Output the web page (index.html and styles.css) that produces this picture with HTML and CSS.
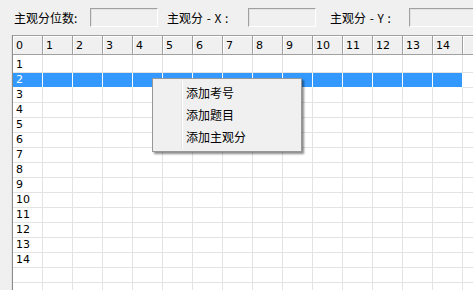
FILE: index.html
```html
<!DOCTYPE html>
<html>
<head>
<meta charset="utf-8">
<link rel="stylesheet" href="styles.css">
</head>
<body>
<div class="toolbar">
  <span class="lbl lbl-a">主观分位数:</span>
  <span class="box box-a"></span>
  <span class="lbl lbl-b">主观分 - X :</span>
  <span class="box box-b"></span>
  <span class="lbl lbl-c">主观分 - Y :</span>
  <span class="box box-c"></span>
</div>
<div class="gridwrap">
  <table class="grid">
    <thead>
      <tr><th>0</th><th>1</th><th>2</th><th>3</th><th>4</th><th>5</th><th>6</th><th>7</th><th>8</th><th>9</th><th>10</th><th>11</th><th>12</th><th>13</th><th>14</th><th></th></tr>
    </thead>
    <tbody>
      <tr class="first"><td>1</td><td></td><td></td><td></td><td></td><td></td><td></td><td></td><td></td><td></td><td></td><td></td><td></td><td></td><td></td><td class="x"></td></tr>
      <tr class="sel"><td>2</td><td></td><td></td><td></td><td></td><td></td><td></td><td></td><td></td><td></td><td></td><td></td><td></td><td></td><td></td><td class="x"></td></tr>
      <tr><td>3</td><td></td><td></td><td></td><td></td><td></td><td></td><td></td><td></td><td></td><td></td><td></td><td></td><td></td><td></td><td class="x"></td></tr>
      <tr><td>4</td><td></td><td></td><td></td><td></td><td></td><td></td><td></td><td></td><td></td><td></td><td></td><td></td><td></td><td></td><td class="x"></td></tr>
      <tr><td>5</td><td></td><td></td><td></td><td></td><td></td><td></td><td></td><td></td><td></td><td></td><td></td><td></td><td></td><td></td><td class="x"></td></tr>
      <tr><td>6</td><td></td><td></td><td></td><td></td><td></td><td></td><td></td><td></td><td></td><td></td><td></td><td></td><td></td><td></td><td class="x"></td></tr>
      <tr><td>7</td><td></td><td></td><td></td><td></td><td></td><td></td><td></td><td></td><td></td><td></td><td></td><td></td><td></td><td></td><td class="x"></td></tr>
      <tr><td>8</td><td></td><td></td><td></td><td></td><td></td><td></td><td></td><td></td><td></td><td></td><td></td><td></td><td></td><td></td><td class="x"></td></tr>
      <tr><td>9</td><td></td><td></td><td></td><td></td><td></td><td></td><td></td><td></td><td></td><td></td><td></td><td></td><td></td><td></td><td class="x"></td></tr>
      <tr><td>10</td><td></td><td></td><td></td><td></td><td></td><td></td><td></td><td></td><td></td><td></td><td></td><td></td><td></td><td></td><td class="x"></td></tr>
      <tr><td>11</td><td></td><td></td><td></td><td></td><td></td><td></td><td></td><td></td><td></td><td></td><td></td><td></td><td></td><td></td><td class="x"></td></tr>
      <tr><td>12</td><td></td><td></td><td></td><td></td><td></td><td></td><td></td><td></td><td></td><td></td><td></td><td></td><td></td><td></td><td class="x"></td></tr>
      <tr><td>13</td><td></td><td></td><td></td><td></td><td></td><td></td><td></td><td></td><td></td><td></td><td></td><td></td><td></td><td></td><td class="x"></td></tr>
      <tr><td>14</td><td></td><td></td><td></td><td></td><td></td><td></td><td></td><td></td><td></td><td></td><td></td><td></td><td></td><td></td><td class="x"></td></tr>
      <tr><td></td><td></td><td></td><td></td><td></td><td></td><td></td><td></td><td></td><td></td><td></td><td></td><td></td><td></td><td></td><td class="x"></td></tr>
      <tr><td></td><td></td><td></td><td></td><td></td><td></td><td></td><td></td><td></td><td></td><td></td><td></td><td></td><td></td><td></td><td class="x"></td></tr>
    </tbody>
  </table>
</div>
<div class="menu">
  <div class="item">添加考号</div>
  <div class="item">添加题目</div>
  <div class="item">添加主观分</div>
</div>
</body>
</html>
```

FILE: styles.css
```css
html, body {
  margin: 0;
  padding: 0;
  background: #f0f0f0;
  width: 473px;
  height: 290px;
  overflow: hidden;
}
body {
  font-family: "DejaVu Sans", "Noto Sans CJK SC", sans-serif;
  font-size: 11px;
  color: #000;
  position: relative;
}
.toolbar {
  height: 35px;
  display: flex;
  align-items: center;
  padding-left: 14px;
  white-space: nowrap;
}
.lbl {
  font-family: "Noto Sans CJK SC", sans-serif;
  font-size: 12px;
  line-height: 16px;
  flex: none;
}
.lbl-a { width: 76px; }
.lbl-b { width: 81px; word-spacing: 1px; }
.lbl-c { width: 79px; word-spacing: 1px; }
.box {
  height: 17px;
  box-sizing: content-box;
  border-top: 1px solid #a0a0a0;
  border-left: 1px solid #a0a0a0;
  border-right: 1px solid #ffffff;
  border-bottom: 1px solid #ffffff;
  box-shadow: inset 1px 1px 0 #e3e3e3;
  background: #f0f0f0;
  flex: none;
}
.box-a { width: 66px; margin-right: 9px; }
.box-b { width: 66px; margin-right: 14px; }
.box-c { width: 80px; }

.gridwrap {
  margin-left: 12px;
  height: 255px;
  overflow: hidden;
  background: #fff;
  border-left: 1px solid #8c8c8c;
  box-shadow: -1px 0 0 #e3e3e3;
}
.grid {
  border-collapse: separate;
  border-spacing: 0;
  table-layout: fixed;
  width: 480px;
}
.grid th, .grid td {
  padding: 0 0 0 3px;
  box-sizing: border-box;
  text-align: left;
  font-weight: normal;
  white-space: nowrap;
  overflow: hidden;
}
.grid th {
  width: 30px;
  height: 20px;
  background: #f0f0f0;
  border-top: 1px solid #a0a0a0;
  border-right: 1px solid #a0a0a0;
  border-bottom: 1px solid #a0a0a0;
  box-shadow: inset 1px 1px 0 #ffffff;
  line-height: 17px;
  vertical-align: middle;
}
.grid td {
  width: 30px;
  height: 15px;
  line-height: 14px;
  border-right: 1px solid #e3e3e3;
  border-bottom: 1px solid #e3e3e3;
  vertical-align: middle;
}
.grid tr.first td {
  height: 18px;
  vertical-align: bottom;
}
.grid tr.sel td {
  background: #3399ff;
  color: #fff;
  border-right-color: #fff;
  border-bottom-color: #fff;
}
.grid tr.sel td.x {
  background: #fff;
  border-right-color: #e3e3e3;
  border-bottom-color: #e3e3e3;
}

.menu {
  position: absolute;
  left: 152px;
  top: 78px;
  width: 148px;
  height: 69px;
  background: #f0f0f0;
  border: 1px solid #979797;
  box-shadow: 2px 2px 2px rgba(0, 0, 0, 0.45);
  padding-top: 3px;
  box-sizing: content-box;
}
.menu::before {
  content: "";
  position: absolute;
  left: 28px;
  top: 2px;
  bottom: 2px;
  width: 1px;
  background: #e2e3e3;
  border-right: 1px solid #ffffff;
}
.item {
  height: 22px;
  line-height: 22px;
  padding-left: 33px;
  font-family: "Noto Sans CJK SC", sans-serif;
  font-size: 12px;
}
```
